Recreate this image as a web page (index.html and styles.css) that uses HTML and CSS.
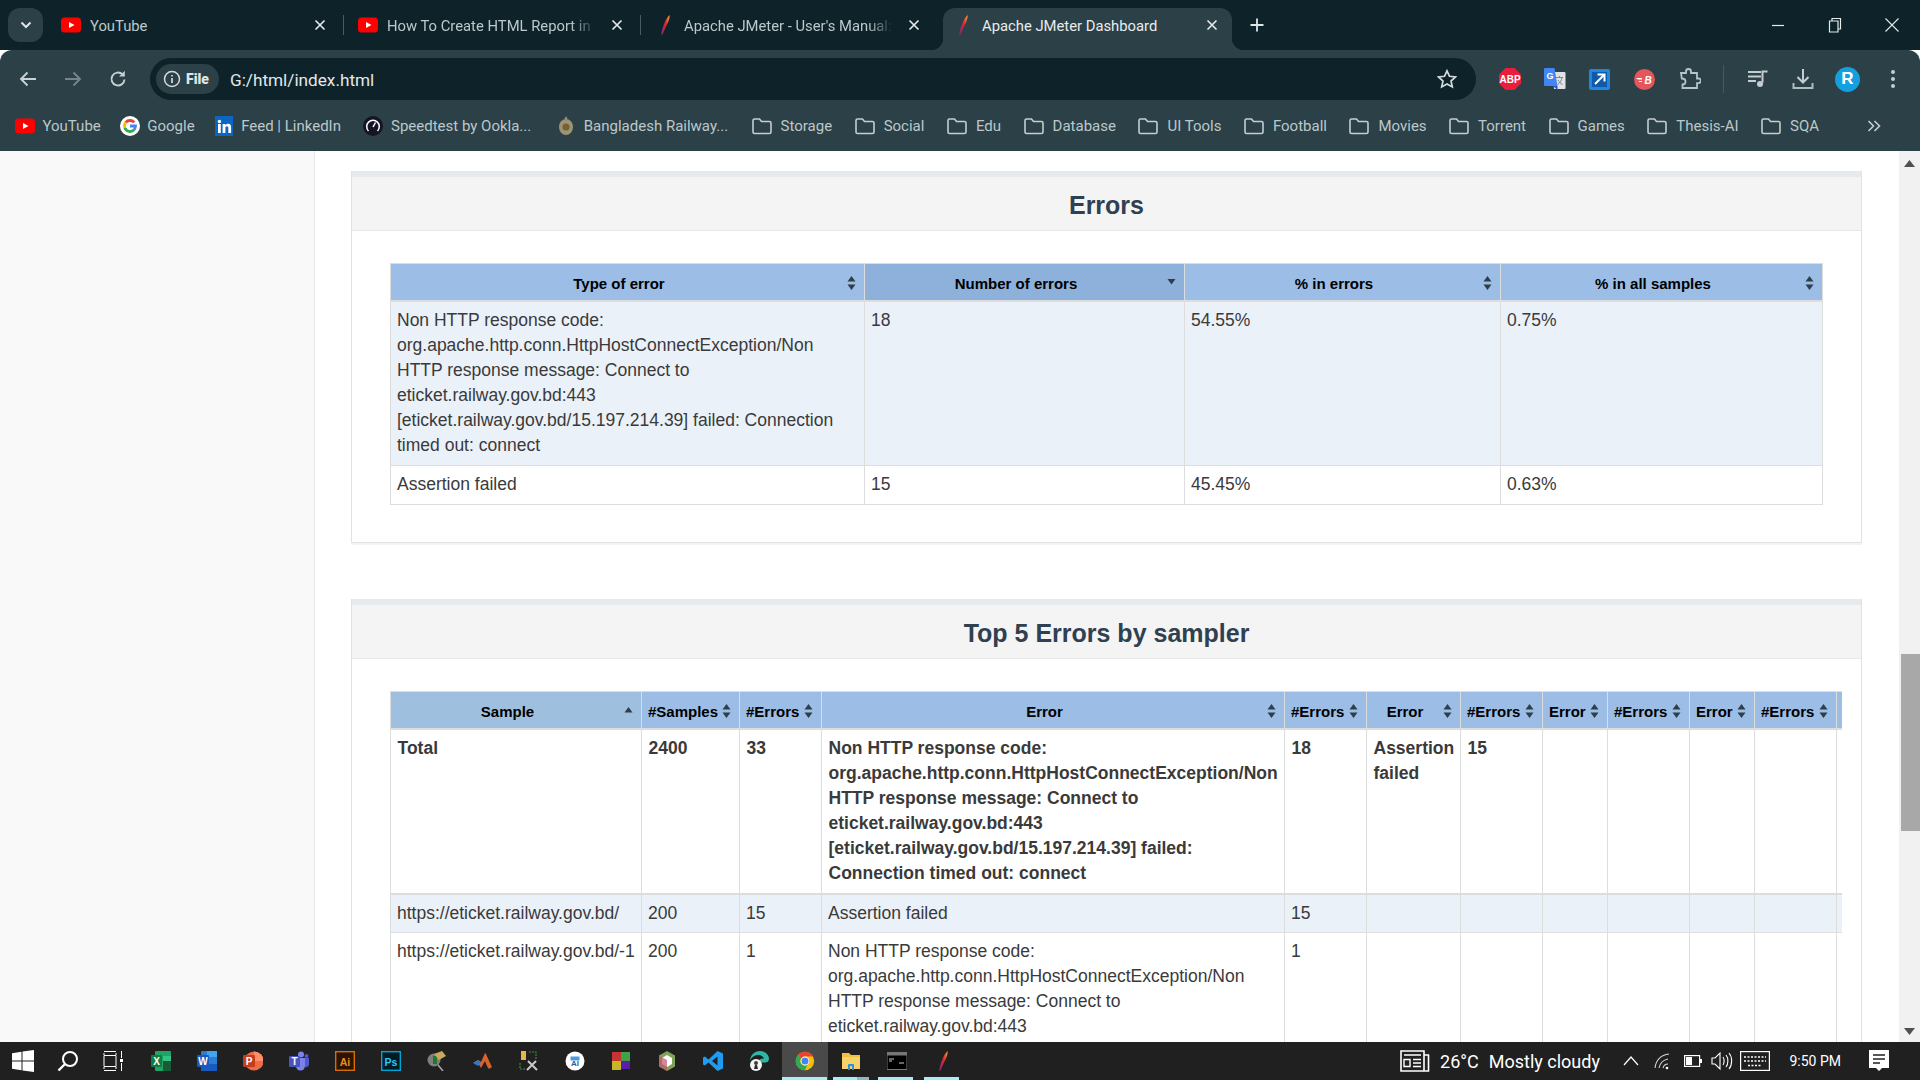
FILE: index.html
```html
<!DOCTYPE html>
<html lang="en">
<head>
<meta charset="utf-8">
<title>Apache JMeter Dashboard</title>
<link rel="stylesheet" href="styles.css">
</head>
<body>
<svg class="defs" width="0" height="0" aria-hidden="true">
  <defs>
    <symbol id="yt" viewBox="0 0 20 20"><rect x="0" y="2.5" width="20" height="15" rx="3.5" fill="#f00"/><path d="M8 7l5.5 3L8 13z" fill="#fff"/></symbol>
    <linearGradient id="fg" x1="1" y1="0" x2="0" y2="1"><stop offset="0" stop-color="#f6a13a"/><stop offset=".45" stop-color="#d8262f"/><stop offset="1" stop-color="#7a2a8c"/></linearGradient>
    <symbol id="feather" viewBox="0 0 20 20"><path d="M14.5 0c.6 3.400-1.500 8-3.500 11.500L7.500 19.500 6.300 20C7 14 9.500 5 14.500 0z" fill="url(#fg)"/></symbol>
    <symbol id="x" viewBox="0 0 14 14"><path d="M2.500 2.500l9 9M11.500 2.500l-9 9" stroke="currentColor" stroke-width="1.700" fill="none"/></symbol>
    <symbol id="folder" viewBox="0 0 20 18"><path d="M1 3.500A1.500 1.500 0 0 1 2.500 2h5l2 2.500h8A1.500 1.500 0 0 1 19 6v9a1.500 1.500 0 0 1-1.500 1.500h-15A1.500 1.500 0 0 1 1 15z" fill="none" stroke="#c5cdd0" stroke-width="1.600"/></symbol>
    <symbol id="sort" viewBox="0 0 8 14"><path d="M4 0l4 5.500H0zM4 14L0 8.500h8z" fill="#2f3f4a"/></symbol>
    <symbol id="sort-up" viewBox="0 0 8 14"><path d="M4 3l4 5.500H0z" fill="#2f3f4a"/></symbol>
    <symbol id="sort-down" viewBox="0 0 8 14"><path d="M0 3h8L4 8.500z" fill="#2f3f4a"/></symbol>
  </defs>
</svg>

<div class="app">
  <header class="tabstrip">
    <button class="tabmenu"><svg width="12" height="8" viewBox="0 0 12 8"><path d="M1.500 1.500L6 6l4.500-4.500" stroke="#dfe5e7" stroke-width="2" fill="none"/></svg></button>
    <div class="tab sep"><svg class="fav"><use href="#yt"/></svg><span class="tabtext">YouTube</span><svg class="tabx"><use href="#x"/></svg></div>
    <div class="tab sep"><svg class="fav"><use href="#yt"/></svg><span class="tabtext fade">How To Create HTML Report in JMeter</span><svg class="tabx"><use href="#x"/></svg></div>
    <div class="tab"><svg class="fav"><use href="#feather"/></svg><span class="tabtext fade">Apache JMeter - User's Manual: Generating</span><svg class="tabx"><use href="#x"/></svg></div>
    <div class="tab active"><svg class="fav"><use href="#feather"/></svg><span class="tabtext">Apache JMeter Dashboard</span><svg class="tabx"><use href="#x"/></svg></div>
    <svg class="newtab" width="16" height="16" viewBox="0 0 16 16"><path d="M8 1.500v13M1.500 8h13" stroke="#dfe5e7" stroke-width="1.800"/></svg>
    <div class="winctl">
      <span class="winbtn"><svg width="14" height="14" viewBox="0 0 14 14"><path d="M1 7.500h12" stroke="#e6e9ea" stroke-width="1.200"/></svg></span>
      <span class="winbtn"><svg width="14" height="16" viewBox="0 0 14 16"><path d="M1.500 4h8.500v11H1.500zM4 4V1.500h8.500V12H10" fill="none" stroke="#e6e9ea" stroke-width="1.200"/></svg></span>
      <span class="winbtn"><svg width="16" height="16" viewBox="0 0 16 16"><path d="M1.500 1.500l13 13M14.500 1.500l-13 13" stroke="#e6e9ea" stroke-width="1.100"/></svg></span>
    </div>
  </header>

  <nav class="toolbar">
    <span class="tbtn"><svg width="20" height="20" viewBox="0 0 20 20"><path d="M18 10H3M9.500 3.500L3 10l6.500 6.500" fill="none" stroke="#c9d1d4" stroke-width="1.900"/></svg></span>
    <span class="tbtn"><svg width="20" height="20" viewBox="0 0 20 20"><path d="M2 10h15M10.500 3.500L17 10l-6.500 6.500" fill="none" stroke="#76858a" stroke-width="1.900"/></svg></span>
    <span class="tbtn"><svg width="20" height="20" viewBox="0 0 20 20"><path d="M16.500 10.500a6.500 6.500 0 1 1-2-5.200" fill="none" stroke="#c9d1d4" stroke-width="1.900"/><path d="M16.800 1.800v5.700h-5.700z" fill="#c9d1d4"/></svg></span>
    <div class="omnibox">
      <span class="chip"><svg width="18" height="18" viewBox="0 0 18 18"><circle cx="9" cy="9" r="7.500" fill="none" stroke="#d5dbdd" stroke-width="1.500"/><path d="M9 8v5M9 5v1.600" stroke="#d5dbdd" stroke-width="1.700"/></svg><b>File</b></span>
      <span class="url">G:/html/index.html</span>
      <svg class="star" width="20" height="20" viewBox="0 0 20 20"><path d="M10 1.800l2.500 5.500 6 .7-4.500 4 1.300 5.900L10 15l-5.300 2.900L6 12 1.500 8l6-.7z" fill="none" stroke="#d5dbdd" stroke-width="1.700"/></svg>
    </div>
    <span class="tbtn"><svg width="22" height="22" viewBox="0 0 22 22"><path d="M6.500 0h9L22 6.500v9L15.500 22h-9L0 15.500v-9z" fill="#ec1c3c"/><text x="11" y="14.800" class="abp">ABP</text></svg></span>
    <span class="tbtn"><svg width="22" height="22" viewBox="0 0 22 22"><path d="M9 4h11.500a1 1 0 0 1 1 1v15a1 1 0 0 1-1 1H10z" fill="#dfe3e5"/><path d="M12 9.500h7M15.500 8v1.500M13.500 16.500c2.500-1.500 4-4 4.500-7M14 12c1 2 2.500 3.500 4.500 4.500" stroke="#7d8588" fill="none"/><path d="M1 0h9.500l3 18H1a1 1 0 0 1-1-1V1a1 1 0 0 1 1-1z" fill="#4285f4"/><path d="M9 18l4.500 4v-4z" fill="#2a56c6"/><text x="6" y="10.500" class="gt">G</text></svg></span>
    <span class="tbtn"><svg width="21" height="21" viewBox="0 0 21 21"><rect width="21" height="21" rx="2" fill="#2186e0"/><rect x="3" y="3" width="15" height="15" fill="#1259a8"/><path d="M6 15L15 6M8.500 5.500H15.500V12.500" stroke="#fff" stroke-width="2" fill="none"/></svg></span>
    <span class="tbtn"><svg width="21" height="21" viewBox="0 0 21 21"><circle cx="10.500" cy="10.500" r="10.500" fill="#e5565a"/><path d="M2 9h6v1.500H4zM4.500 12H8v1H5.500z" fill="#fff"/><text x="14" y="15" class="rb">B</text></svg></span>
    <span class="tbtn"><svg width="22" height="22" viewBox="0 0 22 22"><path d="M2 5h5V3.500a2.500 2.500 0 0 1 5 0V5h6v5.500h1.500a2.300 2.300 0 0 1 0 4.600H18V20H3.500v-3.500c2 0 3-1 3-2.800S5 10.500 2.800 10.500z" fill="none" stroke="#b5c4c9" stroke-width="1.800"/></svg></span>
    <span class="tsep"></span>
    <span class="tbtn"><svg width="22" height="20" viewBox="0 0 22 20"><path d="M1 3h13M1 7.500h13M1 12h8" stroke="#c5cdd0" stroke-width="2"/><path d="M15.500 13.500V2.500H20.500" stroke="#c5cdd0" stroke-width="2" fill="none"/><circle cx="13" cy="15" r="3" fill="#c5cdd0"/></svg></span>
    <span class="tbtn"><svg width="22" height="22" viewBox="0 0 22 22"><path d="M11 1v13M5.500 9l5.500 5.500L16.500 9" fill="none" stroke="#c5cdd0" stroke-width="2"/><path d="M1.500 15v5h19v-5" fill="none" stroke="#aebcc1" stroke-width="2"/></svg></span>
    <span class="tbtn"><span class="avatar">R</span></span>
    <span class="tbtn"><svg width="6" height="20" viewBox="0 0 6 20"><circle cx="3" cy="3" r="2" fill="#c5cdd0"/><circle cx="3" cy="10" r="2" fill="#c5cdd0"/><circle cx="3" cy="17" r="2" fill="#c5cdd0"/></svg></span>
  </nav>

  <nav class="bookmarks">
    <span class="bm tight"><svg class="bmi"><use href="#yt"/></svg>YouTube</span>
    <span class="bm tight"><svg class="bmi" viewBox="0 0 20 20"><circle cx="10" cy="10" r="10" fill="#fff"/><g fill="none" stroke-width="2.800"><path d="M14.200 6.460A5.500 5.500 0 0 0 5.790 6.460" stroke="#ea4335"/><path d="M5.790 6.460A5.500 5.500 0 0 0 4.830 11.880" stroke="#fbbc05"/><path d="M4.830 11.880A5.500 5.500 0 0 0 14.200 13.540" stroke="#34a853"/><path d="M14.200 13.540A5.500 5.500 0 0 0 15.500 10H10" stroke="#4285f4"/></g></svg>Google</span>
    <span class="bm wide"><svg class="bmi" viewBox="0 0 20 20"><rect x="1" y="0" width="18" height="20" fill="#0a66c2"/><rect x="4" y="8" width="2.800" height="9" fill="#fff"/><circle cx="5.400" cy="5.500" r="1.700" fill="#fff"/><path d="M8.600 8h2.700v1.300c.6-1 1.700-1.500 2.800-1.500 2.200 0 3 1.500 3 3.500V17h-2.800v-5c0-1-.4-1.800-1.400-1.800s-1.500.8-1.500 1.800v5H8.600z" fill="#fff"/></svg>Feed | LinkedIn</span>
    <span class="bm wide speed"><svg class="bmi" viewBox="0 0 20 20"><circle cx="10" cy="10" r="10" fill="#141526"/><path d="M5.500 15a6.300 6.300 0 1 1 9 0" fill="none" stroke="#fff" stroke-width="1.500"/><path d="M10 11l2.500-4.500" stroke="#fff" stroke-width="1.500"/></svg>Speedtest by Ookla...</span>
    <span class="bm wide rail"><svg class="bmi" viewBox="0 0 20 20"><ellipse cx="10" cy="11" rx="7" ry="8" fill="#a09272"/><circle cx="10" cy="11" r="3.500" fill="#5d6b3a"/><circle cx="10" cy="11" r="1.500" fill="#b3462f"/><path d="M8.500 3l1.500-3 1.500 3z" fill="#a09272"/></svg>Bangladesh Railway...</span>
    <span class="bm"><svg class="bmi"><use href="#folder"/></svg>Storage</span>
    <span class="bm"><svg class="bmi"><use href="#folder"/></svg>Social</span>
    <span class="bm"><svg class="bmi"><use href="#folder"/></svg>Edu</span>
    <span class="bm"><svg class="bmi"><use href="#folder"/></svg>Database</span>
    <span class="bm"><svg class="bmi"><use href="#folder"/></svg>UI Tools</span>
    <span class="bm"><svg class="bmi"><use href="#folder"/></svg>Football</span>
    <span class="bm"><svg class="bmi"><use href="#folder"/></svg>Movies</span>
    <span class="bm"><svg class="bmi"><use href="#folder"/></svg>Torrent</span>
    <span class="bm"><svg class="bmi"><use href="#folder"/></svg>Games</span>
    <span class="bm"><svg class="bmi"><use href="#folder"/></svg>Thesis-AI</span>
    <span class="bm"><svg class="bmi"><use href="#folder"/></svg>SQA</span>
    <svg class="bmmore" width="14" height="14" viewBox="0 0 14 14"><path d="M1.500 2l5 5-5 5M7.500 2l5 5-5 5" fill="none" stroke="#c5cdd0" stroke-width="1.600"/></svg>
  </nav>

  <div class="viewport">
    <aside class="sidebar"></aside>
    <main class="content">
      <section class="panel">
        <h2 class="panel-title">Errors</h2>
        <div class="panel-body">
          <table class="grid errors">
            <colgroup><col class="e1"><col class="e2"><col class="e3"><col class="e4"></colgroup>
            <thead><tr>
              <th>Type of error<svg class="si"><use href="#sort"/></svg></th>
              <th class="sorted">Number of errors<svg class="si"><use href="#sort-down"/></svg></th>
              <th>% in errors<svg class="si"><use href="#sort"/></svg></th>
              <th>% in all samples<svg class="si"><use href="#sort"/></svg></th>
            </tr></thead>
            <tbody>
              <tr class="odd"><td>Non HTTP response code: org.apache.http.conn.HttpHostConnectException/Non HTTP response message: Connect to eticket.railway.gov.bd:443 [eticket.railway.gov.bd/15.197.214.39] failed: Connection timed out: connect</td><td>18</td><td>54.55%</td><td>0.75%</td></tr>
              <tr><td>Assertion failed</td><td>15</td><td>45.45%</td><td>0.63%</td></tr>
            </tbody>
          </table>
        </div>
      </section>

      <section class="panel">
        <h2 class="panel-title">Top 5 Errors by sampler</h2>
        <div class="panel-body">
          <div class="scroller">
          <table class="grid top5">
            <colgroup><col class="t1"><col class="t2"><col class="t3"><col class="t4"><col class="t3"><col class="t6"><col class="t3"><col class="t8"><col class="t3"><col class="t8"><col class="t3"><col class="t12"></colgroup>
            <thead><tr>
              <th class="sample">Sample<svg class="si"><use href="#sort-up"/></svg></th>
              <th>#Samples<svg class="si"><use href="#sort"/></svg></th>
              <th>#Errors<svg class="si"><use href="#sort"/></svg></th>
              <th>Error<svg class="si"><use href="#sort"/></svg></th>
              <th>#Errors<svg class="si"><use href="#sort"/></svg></th>
              <th>Error<svg class="si"><use href="#sort"/></svg></th>
              <th>#Errors<svg class="si"><use href="#sort"/></svg></th>
              <th>Error<svg class="si"><use href="#sort"/></svg></th>
              <th>#Errors<svg class="si"><use href="#sort"/></svg></th>
              <th>Error<svg class="si"><use href="#sort"/></svg></th>
              <th>#Errors<svg class="si"><use href="#sort"/></svg></th>
              <th></th>
            </tr></thead>
            <tbody>
              <tr class="total"><td>Total</td><td>2400</td><td>33</td><td>Non HTTP response code: org.apache.http.conn.HttpHostConnectException/Non HTTP response message: Connect to eticket.railway.gov.bd:443 [eticket.railway.gov.bd/15.197.214.39] failed: Connection timed out: connect</td><td>18</td><td>Assertion failed</td><td>15</td><td></td><td></td><td></td><td></td><td></td></tr>
              <tr class="odd"><td>https://eticket.railway.gov.bd/</td><td>200</td><td>15</td><td>Assertion failed</td><td>15</td><td></td><td></td><td></td><td></td><td></td><td></td><td></td></tr>
              <tr><td>https://eticket.railway.gov.bd/-1</td><td>200</td><td>1</td><td>Non HTTP response code: org.apache.http.conn.HttpHostConnectException/Non HTTP response message: Connect to eticket.railway.gov.bd:443 [eticket.railway.gov.bd/15.197.214.39] failed: Connection timed out: connect</td><td>1</td><td></td><td></td><td></td><td></td><td></td><td></td><td></td></tr>
            </tbody>
          </table>
          </div>
        </div>
      </section>
    </main>
    <div class="scrollbar">
      <svg class="sb-arrow" width="11" height="7" viewBox="0 0 11 7"><path d="M5.500 0L11 7H0z" fill="#505050"/></svg>
      <div class="sb-thumb"></div>
      <svg class="sb-arrow sb-down" width="11" height="7" viewBox="0 0 11 7"><path d="M0 0h11L5.500 7z" fill="#505050"/></svg>
    </div>
  </div>

  <footer class="taskbar">
    <span class="ti sys"><svg width="22" height="22" viewBox="0 0 22 22"><path d="M0 3.200l9.500-1.400v8.700H0zM10.500 1.600L22 0v10.500H10.500zM0 11.500h9.500v8.700L0 18.800zM10.500 11.500H22V22l-11.500-1.600z" fill="#fff"/></svg></span>
    <span class="ti sys"><svg width="22" height="22" viewBox="0 0 22 22"><circle cx="13" cy="9" r="7" fill="none" stroke="#fff" stroke-width="2"/><path d="M8 14l-6.500 6.500" stroke="#fff" stroke-width="2.400"/></svg></span>
    <span class="ti sys"><svg width="20" height="20" viewBox="0 0 20 20"><path d="M1 .5h12M1 19.500h12M1 4.500h12v11H1zM1 2v2M13 2v2M1 16v2M13 16v2M18.500 0v7M18.500 12v8" fill="none" stroke="#fff" stroke-width="1"/><rect x="17" y="8" width="3" height="3" fill="#fff"/></svg></span>
    <span class="ti first"><svg class="ic" viewBox="0 0 20 20"><rect x="4" width="16" height="20" rx="1" fill="#21a366"/><rect x="12" y="10" width="8" height="10" fill="#185c37"/><rect x="12" y="5" width="8" height="5" fill="#33c481"/><rect y="4" width="11" height="12" rx="1" fill="#107c41"/><text x="5.500" y="14" class="tl">X</text></svg></span>
    <span class="ti"><svg class="ic" viewBox="0 0 20 20"><rect x="4" width="16" height="20" rx="1" fill="#2b7cd3"/><rect x="4" y="13" width="16" height="7" fill="#185abd"/><rect x="10" width="10" height="6" fill="#41a5ee"/><rect y="4" width="12" height="12" rx="1" fill="#185abd"/><text x="6" y="14" class="tl">W</text></svg></span>
    <span class="ti"><svg class="ic" viewBox="0 0 20 20"><circle cx="11" cy="10" r="9.500" fill="#ed6c47"/><path d="M11 .5A9.500 9.500 0 0 1 20.500 10H11z" fill="#ff8f6b"/><rect y="4" width="12" height="12" rx="1" fill="#c43e1c"/><text x="6" y="14" class="tl">P</text></svg></span>
    <span class="ti"><svg class="ic" viewBox="0 0 20 20"><circle cx="12" cy="3.500" r="3" fill="#7b83eb"/><circle cx="17.500" cy="5" r="2" fill="#5059c9"/><path d="M7 7h9v8a4.500 4.500 0 0 1-9 0z" fill="#7b83eb"/><path d="M16 7h4v6a3 3 0 0 1-4 3z" fill="#5059c9"/><rect y="5" width="11" height="11" rx="1" fill="#4b53bc"/><text x="5.500" y="14" class="tl">T</text></svg></span>
    <span class="ti"><svg class="ic" viewBox="0 0 20 20"><rect x=".7" y=".7" width="18.600" height="18.600" fill="#2b1400" stroke="#d96b08" stroke-width="1.400"/><text x="10" y="14.500" class="ai">Ai</text></svg></span>
    <span class="ti"><svg class="ic" viewBox="0 0 20 20"><rect x=".7" y=".7" width="18.600" height="18.600" fill="#001d26" stroke="#00a4d6" stroke-width="1.400"/><text x="10" y="14.500" class="ps">Ps</text></svg></span>
    <span class="ti"><svg class="ic" viewBox="0 0 20 20"><circle cx="7" cy="9" r="6.500" fill="#7f7f7f"/><rect x="6" y="5" width="4" height="8" fill="#1f7a2d"/><path d="M7 3l8-3 4 5-7 4z" fill="#c9a95b"/><path d="M11 14l5 6" stroke="#aaa" stroke-width="1.500"/></svg></span>
    <span class="ti"><svg class="ic" viewBox="0 0 20 20"><path d="M0 12l5-3 3 2 4-9c1 0 3 6 7 14l-3 2c-2-2-4-8-4-8l-4 7-3-5z" fill="#d9622b"/><path d="M0 12l5-3 3 2-3 4z" fill="#3577c7"/></svg></span>
    <span class="ti"><svg class="ic" viewBox="0 0 20 20"><rect x="2" width="5" height="9" fill="#e5b54a"/><path d="M10 1h7v8M1 12v6h6" fill="none" stroke="#3f8a3a" stroke-width="1.200" stroke-dasharray="2 1"/><path d="M8 19l9-9M9 10l9 9" stroke="#c9c9c9" stroke-width="2"/></svg></span>
    <span class="ti"><svg class="ic" viewBox="0 0 20 20"><circle cx="10" cy="10" r="9.500" fill="#fff"/><path d="M5.500 5.500h9v4h-9z" fill="#4a9be0"/><text x="10" y="15" class="wa">AI</text></svg></span>
    <span class="ti"><svg class="ic" viewBox="0 0 20 20"><path d="M1 1h9v9H1z" fill="#c5342f"/><path d="M10 1h9v9h-9z" fill="#3fa14a"/><path d="M1 10h9v9H1z" fill="#c6b72a"/><path d="M10 10h9v8h-9z" fill="#5a1ea8"/></svg></span>
    <span class="ti"><svg class="ic" viewBox="0 0 20 20"><path d="M10 0l8 4.500v11L10 20l-8-4.500v-11z" fill="#7fa35a"/><path d="M10 4l5 3v6l-5 3-5-3V7z" fill="#fff"/><path d="M2 4.500L10 9v11l-8-4.500z" fill="#c0556b" opacity=".7"/></svg></span>
    <span class="ti"><svg class="ic" viewBox="0 0 20 20"><path d="M14.500 0L20 2.500v15L14.500 20 5.500 11.500 1.800 14.500 0 13.500V6.500L1.800 5.500l3.700 3zM14.500 5.500L9 10l5.500 4.500z" fill="#1f9cf0"/></svg></span>
    <span class="ti"><svg class="ic" viewBox="0 0 20 20"><path d="M1 9.500C1.500 4 5.500 0 11 0c5 0 9 3.500 9 8 0 2.500-2 3.500-4 3.500H9c0-3 3-4 6-4-1-2-3-3.500-5-3.500C5.500 4 2.500 6 1 9.500z" fill="#2fb5a3"/><circle cx="7" cy="14" r="6" fill="#f4f4f4"/><circle cx="7" cy="12" r="2" fill="#4a3b32"/><path d="M5 18l1-4h2l1 4z" fill="#2a2a2a"/></svg></span>
    <span class="ti on"><svg class="ic" viewBox="0 0 24 24"><circle cx="12" cy="12" r="11" fill="#fbbc05"/><path d="M12 1a11 11 0 0 1 9.500 5.500H12a5.500 5.500 0 0 0-4.800 2.800L3.500 4.800A11 11 0 0 1 12 1z" fill="#ea4335"/><path d="M3.500 4.800l3.700 4.500a5.500 5.500 0 0 0 7.500 7.500L12 23A11 11 0 0 1 3.500 4.800z" fill="#34a853"/><circle cx="12" cy="12" r="5.300" fill="#fff"/><circle cx="12" cy="12" r="4.200" fill="#4285f4"/></svg></span>
    <span class="ti ul-e"><svg class="ic" viewBox="0 0 20 20"><path d="M1 2h7l2 2h9v3H1z" fill="#f0c040"/><path d="M1 6h18v12H1z" fill="#f5d36a"/><path d="M7 19v-5a1 1 0 0 1 1-1h4a1 1 0 0 1 1 1v5h-2v-4H9v4z" fill="#2f8de0"/></svg></span>
    <span class="ti ul"><svg class="ic" viewBox="0 0 20 20"><rect width="20" height="17" y="1.500" fill="#000" stroke="#777"/><rect y="1.500" width="20" height="3" fill="#777"/><path d="M2 8h5M2 10h3M12 12h5" stroke="#ccc"/></svg></span>
    <span class="ti ul"><svg class="ic" viewBox="0 0 20 20"><use href="#feather"/></svg></span>
    <div class="tray">
      <svg width="30" height="22" viewBox="0 0 30 22"><path d="M1 1h23v20H1zM24 5h4.500v16H3" fill="none" stroke="#fff" stroke-width="1.600"/><path d="M4 5h17M4 9.500h6v7H4zM13 9.500h8M13 13h8M13 16.500h8" fill="none" stroke="#fff" stroke-width="1.400"/></svg>
      <span class="weather">26°C</span>
      <span class="weather cloud">Mostly cloudy</span>
      <svg class="caret" width="16" height="10" viewBox="0 0 16 10"><path d="M1 9l7-8 7 8" fill="none" stroke="#fff" stroke-width="1.200"/></svg>
      <svg width="18" height="18" viewBox="0 0 18 18"><path d="M2 16C3 8 8 3 16 2M6 16c1-5 4-8 9-9M10 16c.5-2 2-4 5-4" fill="none" stroke="#d5d5d5" stroke-width="1.100"/><circle cx="14" cy="16" r="1.300" fill="#fff"/></svg>
      <svg width="18" height="12" viewBox="0 0 18 12"><rect x=".6" y=".6" width="15" height="10.800" fill="none" stroke="#fff" stroke-width="1.200"/><rect x="2" y="2" width="6" height="8" fill="#fff"/><rect x="16" y="4" width="2" height="4" fill="#fff"/></svg>
      <svg width="22" height="20" viewBox="0 0 22 20"><path d="M1 7h3l5-5v16l-5-5H1z" fill="none" stroke="#fff" stroke-width="1.100"/><path d="M12 6c1.500 2 1.500 6 0 8M15 4c2.500 3 2.500 9 0 12M18 2c3.500 4 3.500 12 0 16" fill="none" stroke="#fff" stroke-width="1.100"/></svg>
      <svg width="30" height="20" viewBox="0 0 30 20"><rect x=".6" y=".6" width="28.800" height="18.800" fill="none" stroke="#fff" stroke-width="1.200"/><path d="M4 6h22M4 10h22M8 14.500h14" stroke="#fff" stroke-width="1.500" stroke-dasharray="2 1.500"/></svg>
      <span class="clock">9:50 PM</span>
      <svg class="notif" width="20" height="24" viewBox="0 0 20 24"><path d="M0 1h20v18h-7l-3 3-3-3H0z" fill="#fff"/><path d="M4 6h12M4 10h12M4 14h7" stroke="#202020" stroke-width="1.300"/></svg>
    </div>
  </footer>
</div>
</body>
</html>
```

FILE: styles.css
```css
* { box-sizing: border-box; }
html, body { margin: 0; height: 100%; overflow: hidden; }
body { font-family: "Liberation Sans", Arial, sans-serif; color: #3a3a3a; }
.defs { display: block; height: 0; }
.app { display: flex; flex-direction: column; height: 1080px; width: 1920px; }

/* Tab strip */
.tabstrip { height: 50px; background: #0d2329; display: flex; align-items: flex-end; padding-left: 8px; font-family: Roboto, sans-serif; font-size: 14.800px; color: #bcc8cb; flex: none; }
.tabmenu { width: 35px; height: 34px; margin: 0 4px 8px 0; padding: 0; border: 0; border-radius: 12px; background: #2b4047; display: flex; align-items: center; justify-content: center; }
.tab { width: 297px; height: 42px; display: flex; align-items: center; padding: 0 17px 8px 14px; position: relative; flex: none; }
.tab.sep::after { content: ""; position: absolute; right: 0; top: 7px; width: 1px; height: 20px; background: #4a5c62; }
.tab.active { width: 289px; margin: 0 4px 0 5px; padding: 0 13px 8px 10px; background: #2b4047; border-radius: 12px 12px 0 0; color: #e8ecee; }
.tab.active::before, .tab.active::after { content: ""; position: absolute; bottom: 0; width: 12px; height: 12px; }
.tab.active::before { left: -12px; background: radial-gradient(circle at 0 0, transparent 12px, #2b4047 12.5px); }
.tab.active::after { right: -12px; background: radial-gradient(circle at 100% 0, transparent 12px, #2b4047 12.5px); }
.fav { width: 20px; height: 20px; flex: none; margin-right: 9px; }
.tabtext { flex: 1; white-space: nowrap; overflow: hidden; min-width: 0; padding-top: 1px; }
.tabtext.fade { -webkit-mask-image: linear-gradient(to right, #000 88%, transparent 100%); mask-image: linear-gradient(to right, #000 88%, transparent 100%); }
.tabx { width: 14px; height: 14px; flex: none; margin-left: 14px; color: #e3e8ea; }
.newtab { margin: 0 0 17px 13px; flex: none; }
.winctl { margin-left: auto; align-self: flex-start; display: flex; height: 50px; }
.winbtn { width: 57px; height: 50px; display: flex; align-items: center; justify-content: center; }

/* Toolbar */
.toolbar { height: 50px; background: #2b4047; border-radius: 12px 12px 0 0; display: flex; align-items: flex-end; padding: 0 5px 0 5px; flex: none; }
.tbtn { width: 45px; height: 42px; display: flex; align-items: center; justify-content: center; flex: none; }
.tsep { width: 1px; height: 28px; background: #47595f; margin: 0 11px 7px; flex: none; }
.omnibox { flex: 1; height: 42px; margin: 0 11px 0 10px; background: #0d2329; border-radius: 21px; display: flex; align-items: center; padding-left: 6px; padding-right: 19px; }
.chip { height: 30px; width: 63px; background: #2b4047; border-radius: 15px; display: flex; align-items: center; gap: 5px; padding-left: 7px; font: 700 14px Roboto, sans-serif; color: #dfe5e7; flex: none; }
.url { font: 17.200px Roboto, sans-serif; color: #e3e8ea; margin-left: 11px; padding-top: 2px; }
.star { margin-left: auto; }
.abp { font: 700 10px "Liberation Sans", sans-serif; fill: #fff; text-anchor: middle; }
.gt { font: 700 9px "Liberation Sans", sans-serif; fill: #fff; text-anchor: middle; }
.rb { font: italic 700 10px "Liberation Sans", sans-serif; fill: #fff; text-anchor: middle; }
.avatar { width: 25px; height: 25px; border-radius: 50%; background: #149fe0; color: #fff; font: 700 17px "Liberation Sans", sans-serif; display: flex; align-items: center; justify-content: center; }

/* Bookmarks */
.bookmarks { height: 51px; background: #2b4047; display: flex; align-items: center; padding: 0 0 0 15px; gap: 22.500px; font: 15px Roboto, sans-serif; color: #bcc8cb; flex: none; white-space: nowrap; }
.bm { display: flex; align-items: center; gap: 9px; flex: none; }
.bm.tight { gap: 7.500px; margin-right: -3.500px; }
.bm.wide { gap: 7.500px; margin-right: 0; }
.bm.speed { margin-right: 2.500px; }
.bm.rail { margin-right: 1px; }
.bmi { width: 20px; height: 20px; flex: none; }
.bmmore { margin-left: 25px; flex: none; }

/* Page */
.viewport { flex: 1; min-height: 0; display: flex; background: #fff; overflow: hidden; }
.sidebar { width: 315px; flex: none; background: #f9f9f9; border-right: 1px solid #e7e7e7; }
.content { flex: 1; min-width: 0; padding: 20px 37px 0 36px; }
.panel { border: 1px solid #e2e2e2; border-top: 0; background: #fff; margin-bottom: 56px; box-shadow: 0 2px 0 #f4f4f4; }
.panel-title { margin: 0; height: 60px; padding-top: 4px; background: #f4f4f4; border-top: 6px solid #e7eaec; border-bottom: 1px solid #e7e7e7; text-align: center; font-size: 25px; line-height: 49px; font-weight: 700; color: #2f4050; }
.panel-body { padding: 32px 38px 37px; }
.scroller { overflow: hidden; margin-right: -19px; }
.grid { border-collapse: collapse; table-layout: fixed; font-size: 17.500px; line-height: 25px; }
.grid th, .grid td { border: 1px solid #ddd; }
.grid th { position: relative; background: #9bbde6; color: #000; font-size: 15px; line-height: 21px; font-weight: 700; padding: 9px 23px 6px 6px; text-align: center; white-space: nowrap; border-bottom: 2px solid #ddd; }
.grid th.sorted { background: #8db1da; }
.grid th.sample { background: #9fbfdf; }
.grid td { padding: 6px 6px 7px; vertical-align: top; }
.odd td { background: #eaf1f9; }
.top5 .odd td { padding-bottom: 6px; }
.total td { font-weight: 700; border-bottom: 2px solid #ddd; padding-left: 6.500px; }
.si { position: absolute; right: 8.500px; top: 12px; width: 9px; height: 14px; }
.errors { width: 1432px; }
.e1 { width: 474px; } .e2 { width: 320px; } .e3 { width: 316px; } .e4 { width: 322px; }
.top5 { width: 1466px; }
.t1 { width: 251px; } .t2 { width: 98px; } .t3 { width: 82px; } .t4 { width: 463px; } .t6 { width: 94px; } .t8 { width: 65px; } .t12 { width: 20px; }

/* Scrollbar */
.scrollbar { width: 21px; flex: none; background: #f1f1f1; display: flex; flex-direction: column; align-items: center; position: relative; }
.sb-arrow { flex: none; margin-top: 9px; margin-left: 0; }
.sb-thumb { width: 19px; height: 177px; background: #a8a8a8; margin-top: 487px; margin-left: 2px; flex: none; }
.sb-down { margin-top: auto; margin-bottom: 7px; }

/* Taskbar */
.taskbar { height: 38px; background: #202020; display: flex; align-items: stretch; color: #fff; flex: none; font-family: Roboto, sans-serif; }
.ti { width: 46px; display: flex; align-items: center; justify-content: center; flex: none; position: relative; }
.ti.sys { width: 45px; }
.ti.first { margin-left: 3px; }
.ic { width: 20px; height: 20px; }
.ti.on { background: #4a4a4a; }
.ti.on::after, .ti.ul::after, .ti.ul-e::after { content: ""; position: absolute; bottom: 0; height: 3px; background: #a8ecf6; }
.ti.on::after { left: 0; right: 1px; }
.ti.ul::after { left: 4px; right: 7px; }
.ti.ul-e::after { left: 5px; right: 5px; background: linear-gradient(to right, #a8ecf6 68%, #8fb9c0 68%); }
.tl { font: 700 10px "Liberation Sans", sans-serif; fill: #fff; text-anchor: middle; }
.ai { font: 700 10.500px "Liberation Sans", sans-serif; fill: #f08a1e; text-anchor: middle; }
.ps { font: 700 10.500px "Liberation Sans", sans-serif; fill: #2fc6f5; text-anchor: middle; }
.wa { font: 700 8px "Liberation Sans", sans-serif; fill: #1f5f9e; text-anchor: middle; }
.tray { margin-left: auto; display: flex; align-items: center; padding-right: 31px; }
.weather { font-size: 18px; margin-left: 10px; }
.weather.cloud { margin-left: 10px; }
.tray svg { flex: none; }
.caret { margin-left: 23px; margin-right: 14.500px; }
.tray .caret + svg { margin-right: 12.500px; }
.tray .caret + svg + svg { margin-right: 9.500px; }
.tray .caret + svg + svg + svg { margin-right: 7px; }
.clock { font-size: 14px; margin-left: 19px; margin-right: 28px; white-space: nowrap; }
```
